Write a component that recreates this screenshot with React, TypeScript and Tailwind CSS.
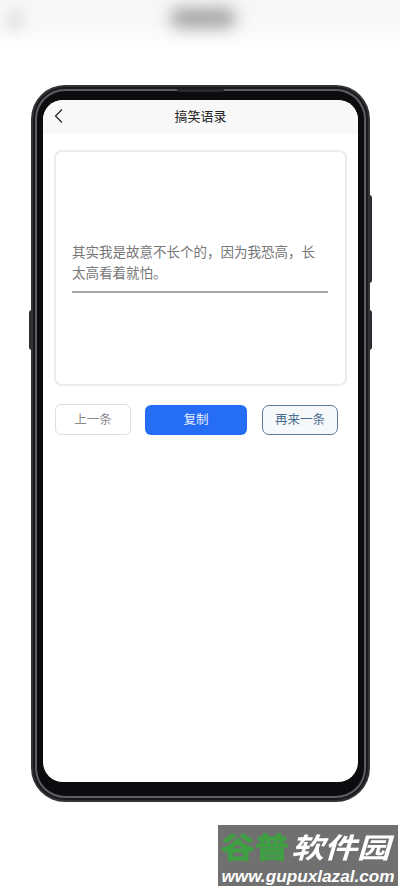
export default function App() {
  const cjk = { fontFamily: '"Noto Sans CJK SC", "Noto Sans", sans-serif' };
  return (
    <div className="relative w-[400px] h-[889px] overflow-hidden bg-white" style={cjk}>
      {/* blurred page header behind the phone */}
      <div className="relative h-[48px] overflow-hidden bg-gradient-to-b from-[#f7f7f7] via-[#f8f8f8] to-[#fefefe]">
        <div className="absolute left-[170px] top-[8px] w-[66px] h-[20px] rounded-full bg-[#a4a4a4] blur-[8px]" />
        <div className="absolute left-[5px] top-[8px] w-[20px] h-[24px] rounded-full bg-[#e8e8e8] blur-[5px]" />
      </div>

      {/* phone */}
      <div className="relative ml-[31px] mt-[37px] w-[339px] h-[717px]">
        <div className="absolute left-[-2px] top-[225px] w-[3px] h-[40px] rounded-l-sm bg-[#2c2c30]" />
        <div className="absolute right-[-2px] top-[110px] w-[3px] h-[88px] rounded-r-sm bg-[#2c2c30]" />
        <div className="absolute right-[-2px] top-[225px] w-[3px] h-[40px] rounded-r-sm bg-[#2c2c30]" />
        <div className="relative h-full rounded-[34px] bg-[#333337] p-[2px]">
          <div className="h-full rounded-[32px] bg-[#1a1a1d] p-[2px]">
            <div className="h-full rounded-[30px] bg-[#5c5c61] p-[2px]">
              <div className="h-full rounded-[28px] bg-[#0c0c0e] pt-[9px] pb-[14px] px-[6px]">
                <div className="h-full rounded-[20px] overflow-hidden bg-white flex flex-col">
                  <div className="relative flex items-center justify-center h-[34px] bg-[#f8f8f8] shrink-0">
                    <svg className="absolute left-[10px] top-[8px]" width="12" height="16" viewBox="0 0 12 16" fill="none" stroke="#222" strokeWidth="1.2">
                      <path d="M9 1.5 L2.5 8 L9 14.5" />
                    </svg>
                    <span className="text-[13px] leading-none text-[#222] mt-[-3px]">搞笑语录</span>
                  </div>
                  <div className="ml-[11px] mt-[16px] w-[293px] h-[236px] rounded-[8px] border-2 border-[#ececec] bg-white pl-[16px] pr-[18px] pt-[89px]">
                    <div className="border-b-2 border-[#a6a6a6] pb-[8px] mr-[-1px] text-[13.5px] leading-[21px] text-[#777]">
                      其实我是故意不长个的，因为我恐高，长<br />太高看着就怕。
                    </div>
                  </div>
                  <div className="ml-[12px] mt-[18px] flex items-center">
                    <div className="w-[76px] h-[31px] rounded-[6px] border border-[#dedede] bg-white flex items-center justify-center text-[12.5px] text-[#8a8a8a]">上一条</div>
                    <div className="ml-[14px] w-[102px] h-[30px] rounded-[6px] bg-[#256df5] flex items-center justify-center text-[12.5px] text-[#e8f0ff]">复制</div>
                    <div className="ml-[15px] w-[76px] h-[30px] rounded-[7px] border border-[#5a7a9c] bg-[#f6f8fa] flex items-center justify-center text-[12.5px] text-[#4a6c8f]">再来一条</div>
                  </div>
                </div>
              </div>
            </div>
          </div>
        </div>
        <div className="absolute left-[146px] top-[4px] w-[47px] h-[3px] rounded-b-sm bg-[#2a2a2d]" />
      </div>

      {/* watermark */}
      <div className="absolute left-[218px] top-[825px] w-[180px] h-[61px] bg-[#707070] overflow-hidden">
        <div className="flex items-center h-[42px] pl-[3px]">
          <span className="text-[34px] leading-none font-bold text-[#3fa043] [-webkit-text-stroke:1px_#3fa043] scale-y-[0.85]">谷普</span>
          <span className="ml-[2px] text-[33px] leading-none font-bold italic text-white scale-y-[0.85]">软件园</span>
        </div>
        <div className="text-[17.2px] leading-[18px] font-bold italic text-white text-center whitespace-nowrap" style={{ fontFamily: '"Liberation Sans", sans-serif' }}>www.gupuxlazal.com</div>
      </div>
    </div>
  );
}
